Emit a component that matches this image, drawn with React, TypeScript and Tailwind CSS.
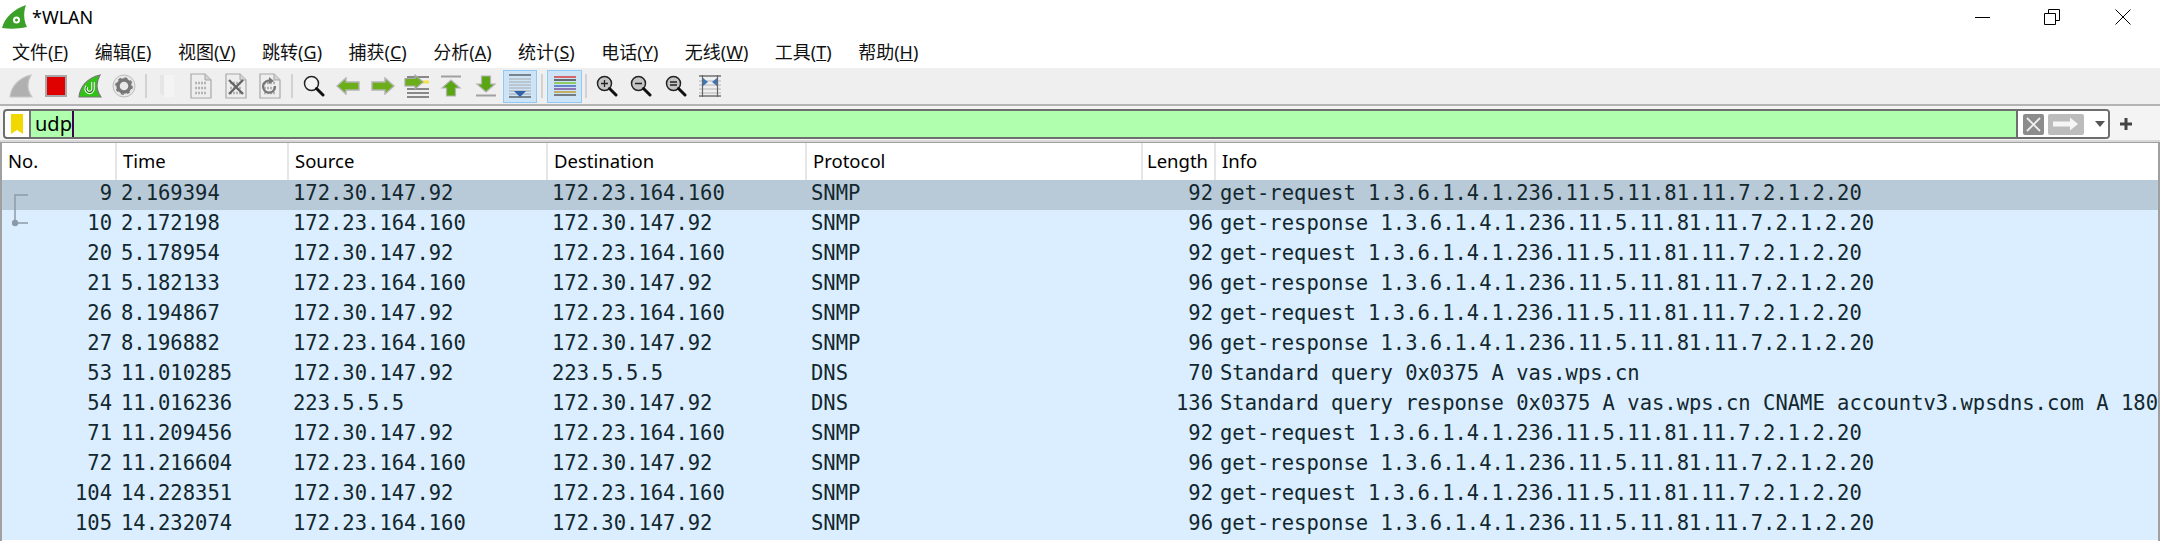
const mono = "font-['DejaVu_Sans_Mono',monospace]";
const ui = "font-['Noto_Sans','Noto_Sans_CJK_SC',sans-serif]";

const menus: [string, string][] = [
  ['文件', 'F'], ['编辑', 'E'], ['视图', 'V'], ['跳转', 'G'], ['捕获', 'C'], ['分析', 'A'],
  ['统计', 'S'], ['电话', 'Y'], ['无线', 'W'], ['工具', 'T'], ['帮助', 'H'],
];

const oid = '1.3.6.1.4.1.236.11.5.11.81.11.7.2.1.2.20';
const a = '172.30.147.92';
const b = '172.23.164.160';

const packets = [
  ['9', '2.169394', a, b, 'SNMP', '92', `get-request ${oid}`],
  ['10', '2.172198', b, a, 'SNMP', '96', `get-response ${oid}`],
  ['20', '5.178954', a, b, 'SNMP', '92', `get-request ${oid}`],
  ['21', '5.182133', b, a, 'SNMP', '96', `get-response ${oid}`],
  ['26', '8.194867', a, b, 'SNMP', '92', `get-request ${oid}`],
  ['27', '8.196882', b, a, 'SNMP', '96', `get-response ${oid}`],
  ['53', '11.010285', a, '223.5.5.5', 'DNS', '70', 'Standard query 0x0375 A vas.wps.cn'],
  ['54', '11.016236', '223.5.5.5', a, 'DNS', '136', 'Standard query response 0x0375 A vas.wps.cn CNAME accountv3.wpsdns.com A 180'],
  ['71', '11.209456', a, b, 'SNMP', '92', `get-request ${oid}`],
  ['72', '11.216604', b, a, 'SNMP', '96', `get-response ${oid}`],
  ['104', '14.228351', a, b, 'SNMP', '92', `get-request ${oid}`],
  ['105', '14.232074', b, a, 'SNMP', '96', `get-response ${oid}`],
];

const cols = 'grid grid-cols-[115px_172px_259px_259px_336px_73px_minmax(0,1fr)]';

function Fin({ fill, stroke, children }: { fill: string; stroke: string; children?: React.ReactNode }) {
  return (
    <svg width="24" height="24" viewBox="0 0 24 24">
      <path d="M1 23 C2 13 9 4 22 1 C18 8 18 16 23 23 Z" fill={fill} stroke={stroke} strokeWidth="1.2" />
      {children}
    </svg>
  );
}

function FileIcon({ children }: { children?: React.ReactNode }) {
  return (
    <svg width="22" height="26" viewBox="0 0 22 26">
      <path d="M1 1 H15 L21 7 V25 H1 Z" fill="#eeeeee" stroke="#a8a8a8" strokeWidth="1.2" />
      <path d="M15 1 V7 H21" fill="#d4d4d4" stroke="#a8a8a8" />
      <path d="M5 10 H17 M5 15 H17 M5 20 H17" stroke="#b4b4b4" strokeWidth="2.4" strokeDasharray="2 1" />
      {children}
    </svg>
  );
}

function Arrow({ dir }: { dir: 'left' | 'right' }) {
  const d = dir === 'left' ? 'M1 9 L10 1 V5 H23 V13 H10 V17 Z' : 'M23 9 L14 1 V5 H1 V13 H14 V17 Z';
  return (
    <svg width="24" height="18" viewBox="0 0 24 18">
      <path d={d} fill="#6cae1a" stroke="#b4b4b4" strokeWidth="1.4" />
    </svg>
  );
}

function Glass({ mark }: { mark?: 'plus' | 'minus' | 'equal' }) {
  return (
    <svg width="22" height="22" viewBox="0 0 22 22">
      <circle cx="8.5" cy="8.5" r="7" fill={mark ? '#c4c4c4' : '#f4f4f4'} stroke="#222" strokeWidth="1.5" />
      <path d="M13.5 13.5 L20 20" stroke="#111" strokeWidth="3" strokeLinecap="round" />
      {mark === 'plus' && <path d="M5 8.5 H12 M8.5 5 V12" stroke="#222" strokeWidth="1.3" />}
      {mark === 'minus' && <path d="M5 8.5 H12" stroke="#222" strokeWidth="1.5" />}
      {mark === 'equal' && <path d="M5 7 H12 M5 10 H12" stroke="#222" strokeWidth="1.3" />}
    </svg>
  );
}

function Tool({ children, active }: { children: React.ReactNode; active?: boolean }) {
  return (
    <div className={`flex h-[33px] w-[34.4px] shrink-0 items-center justify-center ${active ? 'border border-[#90c8f6] bg-[#cde4f7]' : ''}`}>
      {children}
    </div>
  );
}

function Sep({ w }: { w: string }) {
  return (
    <div className={`flex h-[24px] shrink-0 justify-center ${w}`}>
      <div className="h-full w-[2px] bg-[#d2d2d2]" />
    </div>
  );
}

function Toolbar() {
  return (
    <div className="box-content flex h-[36px] items-center border-b-2 border-[#b4b4b4] bg-[#efefef] pl-[4px]">
      <Tool><Fin fill="#b0b0b0" stroke="#c8c8c8" /></Tool>
      <Tool>
        <div className="h-[22px] w-[22px] border-2 border-[#a8a8a8] bg-[#df0000]" />
      </Tool>
      <Tool>
        <Fin fill="#2fc414" stroke="#777">
          <path d="M15 8 V15 A3.5 3.5 0 1 1 9 12.5" fill="none" stroke="#fff" strokeWidth="3.4" />
          <path d="M15 8 V15 A3.5 3.5 0 1 1 9 12.5" fill="none" stroke="#1d7a10" strokeWidth="1.2" />
        </Fin>
      </Tool>
      <Tool>
        <svg width="24" height="24" viewBox="0 0 24 24">
          <circle cx="12" cy="12" r="11" fill="#e8e8e8" stroke="#bbb" />
          <circle cx="12" cy="12" r="6" fill="none" stroke="#777" strokeWidth="3.4" />
          <circle cx="12" cy="12" r="8" fill="none" stroke="#777" strokeWidth="1.6" strokeDasharray="3 3.3" />
        </svg>
      </Tool>
      <Sep w="w-[8px]" />
      <Tool>
        <svg width="16" height="24" viewBox="0 0 16 24">
          <path d="M1 1 H15 V23 H6 L1 19 Z" fill="#e6e6e6" />
          <path d="M5 1 H15 V23 H5 Z" fill="#f4f4f4" />
        </svg>
      </Tool>
      <Tool><FileIcon /></Tool>
      <Tool>
        <FileIcon>
          <path d="M4 7 L18 21 M18 7 L4 21" stroke="#666" strokeWidth="2.4" />
        </FileIcon>
      </Tool>
      <Tool>
        <FileIcon>
          <path d="M16 13 A6 6 0 1 1 12 8" fill="none" stroke="#777" strokeWidth="2.2" />
          <path d="M10 4 L15 8 L10 11 Z" fill="#777" />
        </FileIcon>
      </Tool>
      <Sep w="w-[9.5px]" />
      <Tool><Glass /></Tool>
      <Tool><Arrow dir="left" /></Tool>
      <Tool><Arrow dir="right" /></Tool>
      <Tool>
        <svg width="26" height="24" viewBox="0 0 26 24">
          <path d="M3 3 H25 M3 15 H25 M3 19 H25 M3 23 H25" stroke="#222" strokeWidth="1.2" />
          <path d="M18 8 H25" stroke="#f3e24a" strokeWidth="3" />
          <path d="M19 8 L11 1 V4.5 H1 V12 H11 V15 Z" fill="#6cae1a" stroke="#a8a8a8" strokeWidth="1.2" />
        </svg>
      </Tool>
      <Tool>
        <svg width="22" height="22" viewBox="0 0 22 22">
          <path d="M1 1.5 H21" stroke="#a0a0a0" strokeWidth="2" />
          <path d="M11 5 L20 13 H15.5 V21 H6.5 V13 H2 Z" fill="#5aa512" stroke="#b4b4b4" strokeWidth="1.2" />
        </svg>
      </Tool>
      <Tool>
        <svg width="22" height="22" viewBox="0 0 22 22">
          <path d="M1 20.5 H21" stroke="#a0a0a0" strokeWidth="2" />
          <path d="M11 17 L20 9 H15.5 V1 H6.5 V9 H2 Z" fill="#5aa512" stroke="#b4b4b4" strokeWidth="1.2" />
        </svg>
      </Tool>
      <Tool active>
        <svg width="24" height="24" viewBox="0 0 24 24">
          <path d="M1 1 H23 M1 23 H23" stroke="#222" strokeWidth="1.2" />
          <path d="M1 5 H23 M1 8 H23 M1 11 H23 M1 14 H23 M1 17 H23 M1 20 H23" stroke="#a8a8a8" strokeWidth="1" />
          <path d="M6 17 H18 L12 23 Z" fill="#2f62a8" />
        </svg>
      </Tool>
      <Sep w="w-[10px]" />
      <Tool active>
        <svg width="24" height="20" viewBox="0 0 24 20">
          <path d="M1 1 H23" stroke="#d82020" strokeWidth="1.3" />
          <path d="M1 4 H23" stroke="#2b2b2b" strokeWidth="1.3" />
          <path d="M1 7 H23" stroke="#6cc010" strokeWidth="1.3" />
          <path d="M1 10 H23" stroke="#3050b0" strokeWidth="1.3" />
          <path d="M1 13 H23" stroke="#6a3a90" strokeWidth="1.3" />
          <path d="M1 16 H23" stroke="#c09010" strokeWidth="1.3" />
          <path d="M1 19 H23" stroke="#444" strokeWidth="1.3" />
        </svg>
      </Tool>
      <Sep w="w-[8px]" />
      <Tool><Glass mark="plus" /></Tool>
      <Tool><Glass mark="minus" /></Tool>
      <Tool><Glass mark="equal" /></Tool>
      <Tool>
        <svg width="22" height="22" viewBox="0 0 22 22">
          <path d="M0 1 H22 M0 21 H22" stroke="#333" strokeWidth="1" />
          <path d="M0 6 H22 M0 10 H22 M0 14 H22 M0 18 H22" stroke="#b4b4b4" strokeWidth="1" />
          <path d="M3.5 0 V22 M18.5 0 V22" stroke="#666" strokeWidth="1.2" />
          <path d="M4 3 L9 7 L4 11 Z M18 3 V11 L13 7 Z" fill="#3f74b8" />
        </svg>
      </Tool>
    </div>
  );
}

function FilterBar() {
  return (
    <div className="flex h-[36px] items-center border-b-2 border-[#d8d8d8] bg-[#f4f4f4] pl-[3px] pt-[2px]">
      <div className="flex h-[30px] w-[2107px] shrink-0 items-stretch overflow-hidden rounded-[4px] border-2 border-[#6e6e6e] bg-white">
        <div className="flex w-[26px] shrink-0 items-center justify-center border-r-2 border-[#777]">
          <svg width="13" height="21" viewBox="0 0 13 21">
            <path d="M0 0 H12 V20 L6 16 L0 20 Z" fill="#f0d800" />
          </svg>
        </div>
        <div className={`flex w-[1985px] shrink-0 items-center bg-[#afffaf] pl-[4px] text-[20px] leading-[26px] text-black ${ui}`}>
          <span>udp</span>
          <span className="h-[26px] w-[2px] bg-[#400050]" />
        </div>
        <div className="w-[2px] shrink-0 bg-[#6e6e6e]" />
        <div className="flex grow items-center bg-white pl-[5px]">
          <div className="flex h-[21px] w-[21px] items-center justify-center rounded-[2px] bg-[#8c8c8c]">
            <svg width="15" height="15" viewBox="0 0 15 15">
              <path d="M1 1 L14 14 M14 1 L1 14" stroke="#eee" strokeWidth="1.8" />
            </svg>
          </div>
          <div className="ml-[4px] flex h-[21px] w-[36px] items-center justify-center rounded-[2px] bg-[#bcbcbc]">
            <svg width="26" height="14" viewBox="0 0 26 14">
              <path d="M0 4.5 H17 V0.5 L25 7 L17 13.5 V9.5 H0 Z" fill="#f5f5f5" />
            </svg>
          </div>
          <svg className="ml-[11px]" width="10" height="6" viewBox="0 0 10 6">
            <path d="M0 0 H10 L5 6 Z" fill="#555" />
          </svg>
        </div>
      </div>
      <svg className="ml-[10px]" width="12" height="12" viewBox="0 0 12 12">
        <path d="M6 0 V12 M0 6 H12" stroke="#444" strokeWidth="3" />
      </svg>
    </div>
  );
}

function WindowControls() {
  return (
    <div className="flex items-center">
      <svg width="16" height="16" viewBox="0 0 16 16">
        <path d="M0 8.5 H15" stroke="#000" />
      </svg>
      <svg className="ml-[53px]" width="16" height="16" viewBox="0 0 16 16">
        <path d="M0.5 4.5 H11.5 V15.5 H0.5 Z M4.5 4 V0.5 H15.5 V11.5 H12" fill="none" stroke="#000" />
      </svg>
      <svg className="ml-[55px]" width="16" height="16" viewBox="0 0 16 16">
        <path d="M0.5 0.5 L15.5 15.5 M15.5 0.5 L0.5 15.5" stroke="#000" />
      </svg>
    </div>
  );
}

export default function App() {
  return (
    <div className={`flex h-[541px] w-[2160px] flex-col overflow-hidden bg-white ${ui}`}>
      <div className="flex h-[37px] items-center justify-between pb-[3px] pl-[2px] pr-[29px]">
        <div className="flex items-center">
          <svg width="25" height="24" viewBox="0 0 25 24">
            <path d="M0 23 C3 12 12 4 24 0 C21 8 22 16 25 22 C16 24 8 24 0 23 Z" fill="#3aa027" />
            <circle cx="14.5" cy="15" r="3.5" fill="#fff" />
            <circle cx="14.5" cy="15" r="1.5" fill="#3aa027" />
          </svg>
          <span className="ml-[5px] text-[18px] leading-none text-black">*WLAN</span>
        </div>
        <WindowControls />
      </div>
      <div className="flex h-[31px] items-center pb-[2px] pl-[12px] text-[18px] leading-none text-[#111]">
        {menus.map(([name, key]) => (
          <span key={key} className="mr-[26.5px] whitespace-nowrap">
            {name}(<span className="underline">{key}</span>)
          </span>
        ))}
      </div>
      <Toolbar />
      <FilterBar />
      <div className="flex-1 border-x-2 border-t border-[#a0a0a0]">
        <div className={`${cols} h-[37px] items-center bg-white text-[18.5px] leading-none text-black`}>
          {['No.', 'Time', 'Source', 'Destination', 'Protocol', 'Length', 'Info'].map((h) => (
            <div
              key={h}
              className={`flex h-full items-center border-r-2 border-[#e6e6e6] pl-[6px] last:border-r-0 ${h === 'Length' ? 'justify-end pr-[6px]' : ''}`}
            >
              {h}
            </div>
          ))}
        </div>
        {packets.map((p, i) => (
          <div
            key={p[0]}
            className={`relative ${cols} h-[30px] items-center whitespace-nowrap pb-[3px] text-[20.5px] leading-[27px] text-[#12272e] ${mono} ${i === 0 ? 'bg-[#b8c9d8]' : 'bg-[#daeeff]'}`}
          >
            <div className="pr-[5px] text-right">{p[0]}</div>
            <div className="pl-[4px]">{p[1]}</div>
            <div className="pl-[4px]">{p[2]}</div>
            <div className="pl-[4px]">{p[3]}</div>
            <div className="pl-[4px]">{p[4]}</div>
            <div className="pr-[3px] text-right">{p[5]}</div>
            <div className="pl-[4px]">{p[6]}</div>
            {i === 0 && (
              <svg className="absolute left-[10px] top-[13px] z-10" width="18" height="34" viewBox="0 0 18 34">
                <path d="M16 2 H3 V30 H16" fill="none" stroke="#8d9aa5" strokeWidth="1.5" />
                <circle cx="3" cy="30" r="3.2" fill="#8d9aa5" />
              </svg>
            )}
          </div>
        ))}
      </div>
    </div>
  );
}
